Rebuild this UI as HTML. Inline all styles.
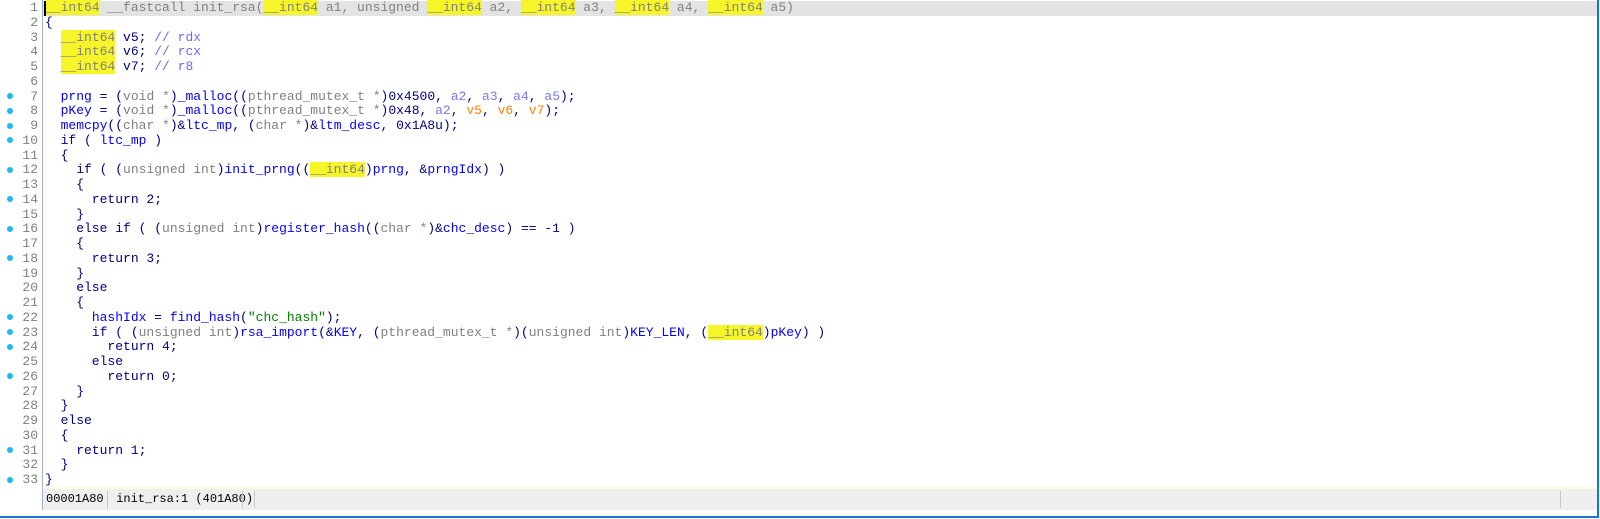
<!DOCTYPE html>
<html><head><meta charset="utf-8"><style>
html,body{margin:0;padding:0;background:#fff;width:1600px;height:519px;overflow:hidden;position:relative;font-family:"Liberation Mono",monospace;font-size:13px;}
#frame{position:absolute;left:0;top:0;width:1597px;height:516px;border-right:2px solid #1a73d0;border-bottom:2px solid #1a73d0;}
#sep{position:absolute;left:42px;top:0;width:1px;height:510px;background:#9fb3cc;}
#hl{position:absolute;left:43px;top:1px;width:1554px;height:15px;background:#e3e3e3;}
#caret{position:absolute;left:44px;top:1px;width:2px;height:15px;background:#000;}
#gut{position:absolute;left:0;top:1px;width:38px;text-align:right;color:#808080;line-height:14.75px;white-space:pre;}
#code{position:absolute;left:45px;top:1px;line-height:14.75px;white-space:pre;color:#000080;}
.dot{position:absolute;left:7px;width:6px;height:6px;border-radius:3px;background:#1fb8f0;}
.y{background:#f5f52a;}
.g{color:#808080}.b{color:#0000ff}.c{color:#6a6af0}.a{color:#7878f0}.o{color:#ff8000}.s{color:#008000}
#status{position:absolute;left:43px;top:487px;width:1554px;height:23px;background:#efefef;border-top:2px solid #fffbe0;box-sizing:border-box;color:#000;font-size:12px;line-height:20px;}
#status span{position:absolute;top:0;}
.vs{position:absolute;top:2px;width:1px;height:17px;background:#c8c8c8;}
</style></head><body>
<div id="frame"></div>
<div id="hl"></div>
<div id="sep"></div>
<div id="gut">1
2
3
4
5
6
7
8
9
10
11
12
13
14
15
16
17
18
19
20
21
22
23
24
25
26
27
28
29
30
31
32
33</div>
<div class="dot" style="top:93px"></div>
<div class="dot" style="top:108px"></div>
<div class="dot" style="top:123px"></div>
<div class="dot" style="top:137px"></div>
<div class="dot" style="top:167px"></div>
<div class="dot" style="top:196px"></div>
<div class="dot" style="top:226px"></div>
<div class="dot" style="top:255px"></div>
<div class="dot" style="top:314px"></div>
<div class="dot" style="top:329px"></div>
<div class="dot" style="top:344px"></div>
<div class="dot" style="top:373px"></div>
<div class="dot" style="top:447px"></div>
<div class="dot" style="top:477px"></div>
<div id="code"><span class="g"><span class="y">__int64</span> __fastcall init_rsa(<span class="y">__int64</span> a1, unsigned <span class="y">__int64</span> a2, <span class="y">__int64</span> a3, <span class="y">__int64</span> a4, <span class="y">__int64</span> a5)</span>
{
  <span class="y g">__int64</span> v5; <span class="c">// rdx</span>
  <span class="y g">__int64</span> v6; <span class="c">// rcx</span>
  <span class="y g">__int64</span> v7; <span class="c">// r8</span>

  <span class="b">prng</span> = (<span class="g">void *</span>)<span class="b">_malloc</span>((<span class="g">pthread_mutex_t *</span>)0x4500, <span class="a">a2</span>, <span class="a">a3</span>, <span class="a">a4</span>, <span class="a">a5</span>);
  <span class="b">pKey</span> = (<span class="g">void *</span>)<span class="b">_malloc</span>((<span class="g">pthread_mutex_t *</span>)0x48, <span class="a">a2</span>, <span class="o">v5</span>, <span class="o">v6</span>, <span class="o">v7</span>);
  <span class="b">memcpy</span>((<span class="g">char *</span>)&amp;<span class="b">ltc_mp</span>, (<span class="g">char *</span>)&amp;<span class="b">ltm_desc</span>, 0x1A8u);
  if ( <span class="b">ltc_mp</span> )
  {
    if ( (<span class="g">unsigned int</span>)<span class="b">init_prng</span>((<span class="y g">__int64</span>)<span class="b">prng</span>, &amp;<span class="b">prngIdx</span>) )
    {
      return 2;
    }
    else if ( (<span class="g">unsigned int</span>)<span class="b">register_hash</span>((<span class="g">char *</span>)&amp;<span class="b">chc_desc</span>) == -1 )
    {
      return 3;
    }
    else
    {
      <span class="b">hashIdx</span> = <span class="b">find_hash</span>(<span class="s">"chc_hash"</span>);
      if ( (<span class="g">unsigned int</span>)<span class="b">rsa_import</span>(&amp;<span class="b">KEY</span>, (<span class="g">pthread_mutex_t *</span>)(<span class="g">unsigned int</span>)<span class="b">KEY_LEN</span>, (<span class="y g">__int64</span>)<span class="b">pKey</span>) )
        return 4;
      else
        return 0;
    }
  }
  else
  {
    return 1;
  }
}</div>
<div id="caret"></div>
<div id="status"><span style="left:3px">00001A80</span><div class="vs" style="left:64px"></div><span style="left:66px">&nbsp;init_rsa:1 (401A80)</span><div class="vs" style="left:199px"></div><div class="vs" style="left:211px"></div><div class="vs" style="left:1517px"></div></div>
</body></html>
